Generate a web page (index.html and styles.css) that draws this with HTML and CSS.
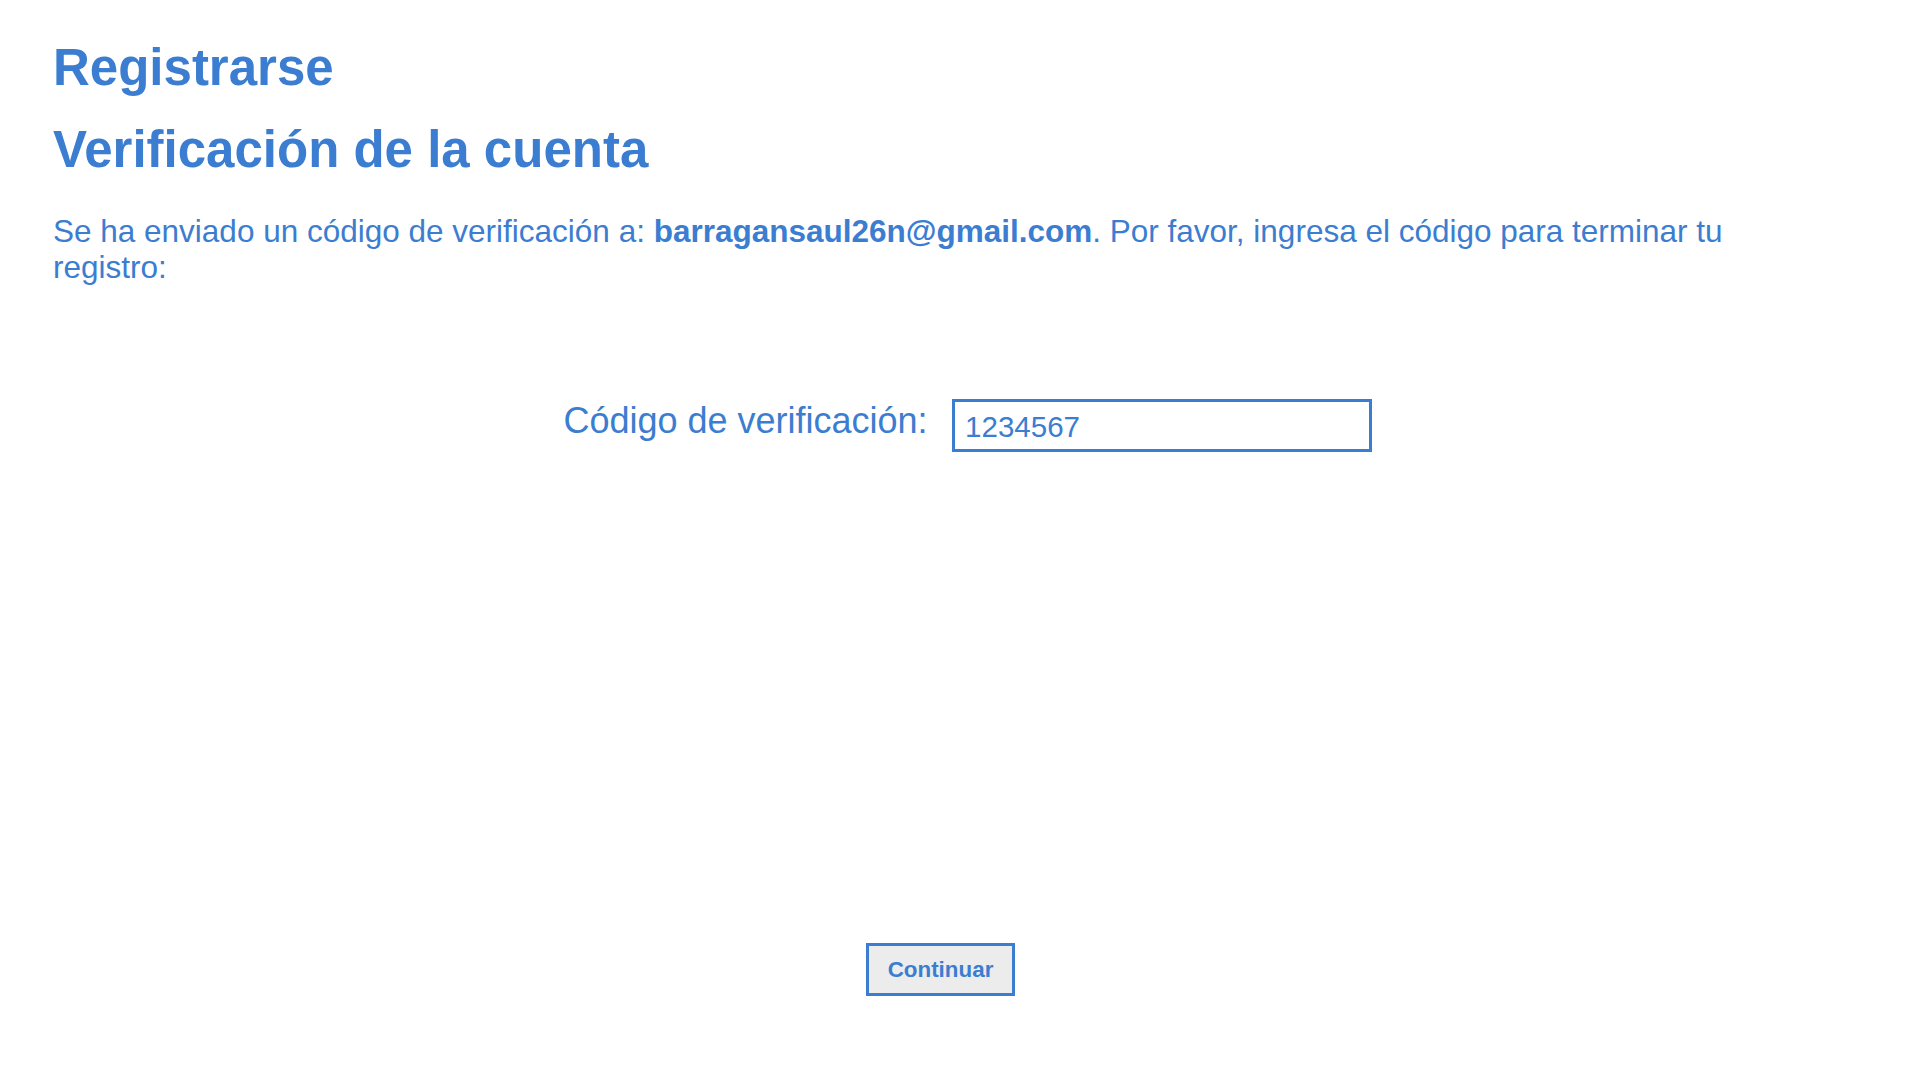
FILE: index.html
```html
<!DOCTYPE html>
<html lang="es">
<head>
<meta charset="utf-8">
<title>Registrarse</title>
<link rel="stylesheet" href="styles.css">
</head>
<body>
<main class="page">
  <h1 class="title">Registrarse</h1>
  <h1 class="title title-second">Verificación de la cuenta</h1>
  <p class="intro">Se ha enviado un código de verificación a: <strong>barragansaul26n@gmail.com</strong>. Por favor, ingresa el código para terminar tu registro:</p>
  <form class="form">
    <div class="field-row">
      <label class="field-label" for="code">Código de verificación:</label>
      <input class="field-input" id="code" type="text" value="1234567">
    </div>
    <div class="actions">
      <button class="btn" type="button">Continuar</button>
    </div>
  </form>
</main>
</body>
</html>
```

FILE: styles.css
```css
html, body {
  margin: 0;
  padding: 0;
  background: #ffffff;
}

body {
  font-family: "Liberation Sans", Arial, sans-serif;
  color: #3b7dd0;
}

.page {
  padding: 39px 92px 0 53px;
}

.title {
  margin: 0;
  font-size: 51px;
  line-height: 58px;
  font-weight: 700;
}

.title-second {
  margin-top: 24px;
}

.intro {
  margin: 35px 0 0 0;
  font-size: 31.5px;
  line-height: 35.5px;
}

.intro strong {
  font-weight: 700;
}

.form {
  margin: 0;
}

.field-row {
  display: flex;
  justify-content: center;
  align-items: flex-start;
  margin-top: 114px;
  padding-left: 54.5px;
}

.field-label {
  font-size: 36px;
  line-height: 41px;
  margin-top: 0.5px;
  margin-right: 24.5px;
}

.field-input {
  box-sizing: border-box;
  width: 420px;
  height: 53px;
  border: 3px solid #3b7dd0;
  border-radius: 0;
  padding: 2px 9px 0 10px;
  margin: 0;
  font-family: "Liberation Sans", Arial, sans-serif;
  font-size: 29.5px;
  color: #3b7dd0;
  background: #ffffff;
  outline: none;
}

.actions {
  display: flex;
  justify-content: center;
  margin-top: 491px;
}

.btn {
  box-sizing: border-box;
  width: 149px;
  height: 53px;
  border: 3px solid #3b7dd0;
  border-radius: 0;
  background: #ececec;
  color: #3b7dd0;
  font-family: "Liberation Sans", Arial, sans-serif;
  font-size: 22.4px;
  font-weight: 700;
  padding: 0;
  margin: 0;
}
```
